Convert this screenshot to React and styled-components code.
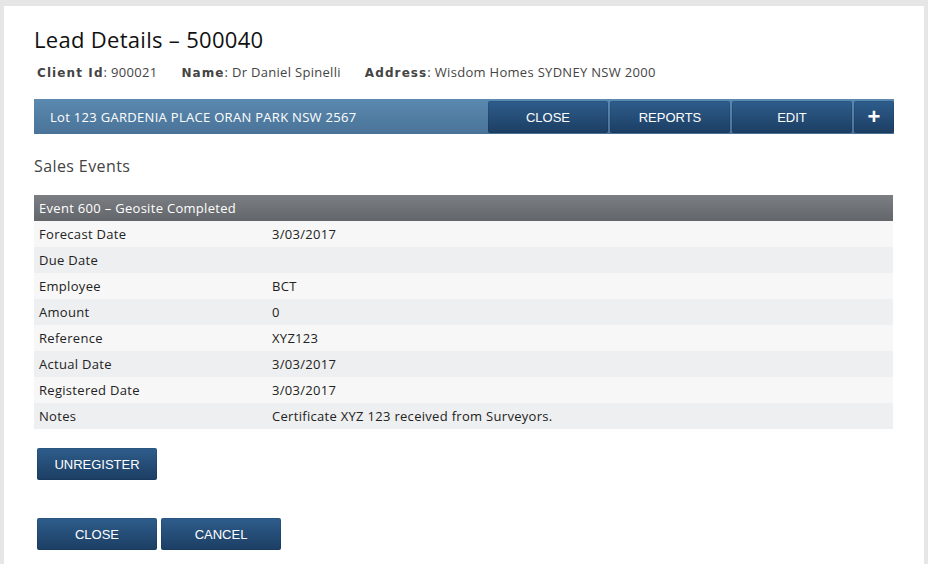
import styled, { createGlobalStyle } from "styled-components";

const GlobalStyle = createGlobalStyle`
  html, body {
    margin: 0;
    padding: 0;
    background: #e6e6e6;
  }
  body {
    font-family: "Open Sans", "DejaVu Sans", sans-serif;
  }
  * {
    box-sizing: border-box;
  }
`;

const Page = styled.div`
  width: 928px;
  height: 564px;
  padding: 6px 4px 0 4px;
  overflow: hidden;
`;

const Panel = styled.div`
  background: #fff;
  height: 100%;
  padding: 22px 30px 0 30px;
`;

const Heading = styled.h1`
  margin: 0;
  font-size: 22px;
  font-weight: 400;
  color: #111;
  line-height: 22px;
  letter-spacing: 0.3px;
`;

const InfoRow = styled.div`
  display: flex;
  gap: 24px;
  margin: 14px 0 0 3px;
  font-size: 13px;
  letter-spacing: 0.3px;
  color: #444;
  line-height: 16px;
  b {
    font-family: "DejaVu Sans", Verdana, sans-serif;
    font-size: 12px;
    font-weight: 700;
    letter-spacing: 1.1px;
    color: #444;
  }
`;

const AddressBar = styled.div`
  display: flex;
  align-items: center;
  height: 35px;
  margin-top: 18px;
  padding: 2px 0 1px 16px;
  background: linear-gradient(#5b89b0, #4a7398);
`;

const AddressText = styled.div`
  flex: 1;
  color: #fff;
  font-size: 13px;
  letter-spacing: 0.3px;
`;

const BarButtons = styled.div`
  display: flex;
  gap: 2px;
  height: 100%;
`;

const Button = styled.button`
  width: ${(p) => p.$w || 120}px;
  height: 32px;
  border: none;
  border-radius: 2px;
  background: linear-gradient(#2e5d8c, #1c3e63);
  color: #fff;
  font-family: "Liberation Sans", Arial, sans-serif;
  font-size: ${(p) => (p.$big ? "22px" : "13px")};
  font-weight: ${(p) => (p.$big ? 700 : 400)};
  line-height: 1;
  padding: 0;
  cursor: pointer;
  box-shadow: inset 0 0 0 1px rgba(0, 0, 0, 0.08);
`;

const SectionTitle = styled.h2`
  margin: 22px 0 0 0;
  font-size: 16px;
  font-weight: 400;
  color: #444;
  line-height: 20px;
  letter-spacing: 0.4px;
`;

const Table = styled.div`
  margin-top: 19px;
  width: 859px;
`;

const TableHead = styled.div`
  height: 26px;
  display: flex;
  align-items: center;
  padding-left: 5px;
  background: linear-gradient(#7b7e82, #626569);
  color: #fff;
  font-size: 13px;
  letter-spacing: 0.3px;
`;

const Row = styled.div`
  display: grid;
  grid-template-columns: 233px 1fr;
  align-items: center;
  height: 26px;
  padding-left: 5px;
  background: ${(p) => (p.$alt ? "#eeeff0" : "#f7f7f7")};
  font-size: 13px;
  letter-spacing: 0.3px;
  color: #222;
`;

const ButtonRow = styled.div`
  display: flex;
  gap: 4px;
  margin: ${(p) => p.$m};
  padding-left: 3px;
`;

const rows = [
  ["Forecast Date", "3/03/2017"],
  ["Due Date", ""],
  ["Employee", "BCT"],
  ["Amount", "0"],
  ["Reference", "XYZ123"],
  ["Actual Date", "3/03/2017"],
  ["Registered Date", "3/03/2017"],
  ["Notes", "Certificate XYZ 123 received from Surveyors."],
];

export default function App() {
  return (
    <>
      <GlobalStyle />
      <Page>
        <Panel>
          <Heading>Lead Details – 500040</Heading>
          <InfoRow>
            <span>
              <b>Client Id</b>: 900021
            </span>
            <span>
              <b>Name</b>: Dr Daniel Spinelli
            </span>
            <span>
              <b>Address</b>: Wisdom Homes SYDNEY NSW 2000
            </span>
          </InfoRow>
          <AddressBar>
            <AddressText>Lot 123 GARDENIA PLACE ORAN PARK NSW 2567</AddressText>
            <BarButtons>
              <Button>CLOSE</Button>
              <Button>REPORTS</Button>
              <Button>EDIT</Button>
              <Button $w={40} $big>
                +
              </Button>
            </BarButtons>
          </AddressBar>
          <SectionTitle>Sales Events</SectionTitle>
          <Table>
            <TableHead>Event 600 – Geosite Completed</TableHead>
            {rows.map(([k, v], i) => (
              <Row key={k} $alt={i % 2 === 1}>
                <span>{k}</span>
                <span>{v}</span>
              </Row>
            ))}
          </Table>
          <ButtonRow $m="19px 0 0 0">
            <Button>UNREGISTER</Button>
          </ButtonRow>
          <ButtonRow $m="38px 0 0 0">
            <Button>CLOSE</Button>
            <Button>CANCEL</Button>
          </ButtonRow>
        </Panel>
      </Page>
    </>
  );
}
